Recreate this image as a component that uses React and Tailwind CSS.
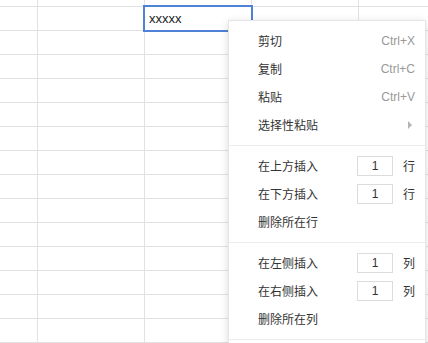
import React from "react";

const ROWS = 15;
const COLS = [38, 107, 107, 107, 107];

function Grid() {
  const rows = [];
  for (let r = 0; r < ROWS; r++) {
    rows.push(
      <div key={r} className={`flex ${r === 0 ? "h-[7px]" : "h-[24px]"}`}>
        {COLS.map((w, c) => (
          <div
            key={c}
            style={{ width: w }}
            className="shrink-0 border-r border-b border-[#e2e2e2]"
          />
        ))}
      </div>
    );
  }
  return <div className="flex flex-col">{rows}</div>;
}

function Item({ label, right, arrow }) {
  return (
    <div className="flex h-[28px] items-center pl-[29px] pr-[10px] text-[12px] text-[#333]">
      <span className="flex-1">{label}</span>
      {right && (
        <span className="text-[#999] text-[12px] [font-family:'Liberation_Sans',Arial,sans-serif]">
          {right}
        </span>
      )}
      {arrow && (
        <span className="mr-[3px] h-0 w-0 border-y-[4px] border-l-[4px] border-y-transparent border-l-[#b5b5b5]" />
      )}
    </div>
  );
}

function InputItem({ label, unit }) {
  return (
    <div className="flex h-[28px] items-center pl-[29px] pr-[10px] text-[12px] text-[#333]">
      <span className="w-[100px]">{label}</span>
      <div className="flex h-[20px] w-[36px] items-center justify-center border border-[#dcdcdc] text-[12px] [font-family:'Liberation_Sans',Arial,sans-serif]">
        1
      </div>
      <span className="ml-[10px]">{unit}</span>
    </div>
  );
}

export default function App() {
  return (
    <div className="relative h-[343px] w-[428px] overflow-hidden bg-white [font-family:'Noto_Sans_CJK_SC','Liberation_Sans',sans-serif]">
      <Grid />
      <div className="absolute left-[143px] top-[5px] flex h-[27px] w-[110px] items-center border-2 border-[#4d82d6] bg-white pl-[4px] text-[13px] text-[#222] [font-family:'Liberation_Sans',Arial,sans-serif]">
        xxxxx
      </div>
      <div className="absolute left-[228px] top-[20px] w-[198px] border border-[#e6e6e6] bg-white shadow-[0_2px_8px_rgba(0,0,0,0.15)]">
        <div className="py-[6px]">
          <Item label="剪切" right="Ctrl+X" />
          <Item label="复制" right="Ctrl+C" />
          <Item label="粘贴" right="Ctrl+V" />
          <Item label="选择性粘贴" arrow />
        </div>
        <div className="border-t border-[#ececec] py-[6px]">
          <InputItem label="在上方插入" unit="行" />
          <InputItem label="在下方插入" unit="行" />
          <Item label="删除所在行" />
        </div>
        <div className="border-t border-[#ececec] py-[6px]">
          <InputItem label="在左侧插入" unit="列" />
          <InputItem label="在右侧插入" unit="列" />
          <Item label="删除所在列" />
        </div>
        <div className="border-t border-[#ececec] h-[20px]" />
      </div>
    </div>
  );
}
